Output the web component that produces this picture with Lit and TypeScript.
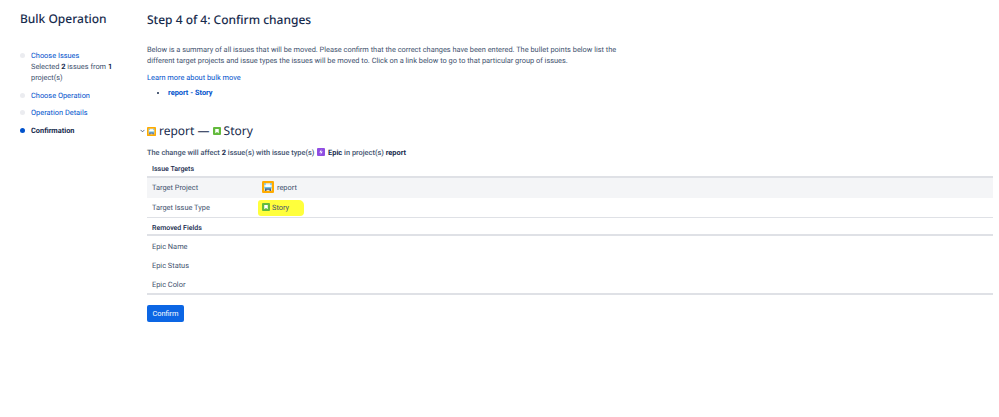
import { LitElement, html, css } from "lit";
import { customElement } from "lit/decorators.js";

const projectIcon = (size: number) => html`<svg class="ico" width=${size} height=${size} viewBox="0 0 16 16">
  <rect width="16" height="16" rx="1.5" fill="#ffab00"/>
  <rect x="3" y="3" width="10" height="10" fill="#dff3fb"/>
  <rect x="5" y="5" width="6" height="3" fill="#fff"/>
  <rect x="3" y="3" width="2" height="2" fill="#5fb7e5"/>
  <rect x="11" y="3" width="2" height="2" fill="#5fb7e5"/>
  <rect x="3" y="8" width="10" height="2" fill="#6cc4e8"/>
  <rect x="4" y="10" width="8" height="1.5" fill="#243c6b"/>
  <rect x="4" y="11.5" width="2" height="1.5" fill="#243c6b"/>
  <rect x="10" y="11.5" width="2" height="1.5" fill="#243c6b"/>
</svg>`;

const storyIcon = (size: number) => html`<svg class="ico" width=${size} height=${size} viewBox="0 0 16 16">
  <rect width="16" height="16" rx="2" fill="#63ba3c"/>
  <path d="M4.5 4h7v8.5L8 10.2l-3.5 2.3z" fill="#fff"/>
</svg>`;

const epicIcon = () => html`<svg class="ico inl" width="8" height="8" viewBox="0 0 16 16">
  <rect width="16" height="16" rx="2" fill="#904ee2"/>
  <path d="M9 2.5 4.5 9H8l-1 4.5L11.5 7H8z" fill="#fff"/>
</svg>`;

@customElement("app-root")
export class AppRoot extends LitElement {
  static styles = css`
    :host {
      display: flex;
      width: 999px;
      height: 417px;
      overflow: hidden;
      background: #fff;
      font-family: Roboto, "Noto Sans", sans-serif;
      font-size: 7.4px;
      line-height: 11px;
      color: #42526e;
      text-rendering: geometricPrecision;
    }
    .side { width: 147px; flex: none; padding: 11px 0 0 20px; box-sizing: border-box; }
    .side h1 { margin: 0 0 24px; font-family: "Noto Sans", sans-serif; font-size: 12px; line-height: 15px; font-weight: 500; color: #172b4d; }
    .steps { list-style: none; margin: 0; padding: 0; display: flex; flex-direction: column; gap: 6.5px; }
    .steps li { position: relative; padding-left: 11px; width: 95px; box-sizing: border-box; line-height: 11px; color: #42526e; }
    .steps li::before {
      content: ""; position: absolute; left: 0; top: 3px;
      width: 5px; height: 5px; border-radius: 50%; background: #ebecf0;
    }
    .steps li.on::before { background: #0052cc; }
    .steps li.on { font-weight: 700; color: #172b4d; }
    a { color: #0052cc; text-decoration: none; }
    b { color: #172b4d; font-weight: 700; }
    .main { width: 846px; flex: none; padding-top: 12px; box-sizing: border-box; }
    .main h2 { margin: 0 0 17px; font-family: "Noto Sans", sans-serif; font-size: 12px; line-height: 15px; font-weight: 500; color: #172b4d; }
    .intro { margin: 0 0 6px; width: 475px; line-height: 11px; }
    .learn { margin: 0 0 4px; }
    .list { margin: 0 0 25px; padding: 0 0 0 21px; color: #172b4d; }
    .list a { font-weight: 700; }
    .head { display: flex; align-items: center; gap: 3px; margin: 0 0 8px -7px; font-family: "Noto Sans", sans-serif; font-size: 12px; line-height: 16px; font-weight: 400; color: #172b4d; }
    .chev { width: 5px; flex: none; margin-right: -1px; }
    .ico { flex: none; display: block; }
    .ico.inl { display: inline-block; vertical-align: -1px; margin: 0 1px; }
    .sum { margin: 0 0 3px; font-weight: 500; color: #42526e; white-space: nowrap; }
    table { width: 846px; border-collapse: collapse; }
    th { text-align: left; vertical-align: bottom; padding: 0 5px 1px; height: 14px; font-weight: 500; font-size: 7px; color: #172b4d; border-bottom: 2px solid #dfe1e6; }
    tr.t2 th { height: 16px; padding-bottom: 0; }
    td { padding: 0 5px; color: #42526e; height: 19px; }
    td:first-child { width: 100px; }
    tr.f td { padding-top: 1px; height: 18px; }
    tr.f.end2 td { padding-top: 2px; height: 17px; border-bottom: 2px solid #dfe1e6; }
    tr.grey td { background: #f4f5f7; padding-bottom: 2px; height: 18px; }
    tr.end td { height: 19px; border-bottom: 1px solid #dfe1e6; }
    .cell { display: flex; align-items: center; gap: 3px; }
    .mark { background: #ffff3c; display: inline-flex; align-items: center; gap: 2px; padding: 2px 15px 3px 4px; margin-left: -4px; border-radius: 3px 5px 4px 3px; }
    button {
      margin-top: 10px; width: 37px; height: 17px; border: 0; border-radius: 2px; padding: 0;
      background: #0c66e4; color: #fff; font: inherit; display: block;
    }
  `;

  render() {
    return html`
      <aside class="side">
        <h1>Bulk Operation</h1>
        <ul class="steps">
          <li><a href="#">Choose Issues</a><br />Selected <b>2</b> issues from <b>1</b> project(s)</li>
          <li><a href="#">Choose Operation</a></li>
          <li><a href="#">Operation Details</a></li>
          <li class="on">Confirmation</li>
        </ul>
      </aside>
      <main class="main">
        <h2>Step 4 of 4: Confirm changes</h2>
        <p class="intro">Below is a summary of all issues that will be moved. Please confirm that the correct changes have been entered. The bullet points below list the different target projects and issue types the issues will be moved to. Click on a link below to go to that particular group of issues.</p>
        <p class="learn"><a href="#">Learn more about bulk move</a></p>
        <ul class="list"><li><a href="#">report - Story</a></li></ul>
        <div class="head">
          <svg class="chev" viewBox="0 0 6 4" height="4"><path d="M.7.7 3 3 5.3.7" fill="none" stroke="#42526e" stroke-width="1"/></svg>
          ${projectIcon(9)}<span>report —</span>${storyIcon(8)}<span>Story</span>
        </div>
        <div class="sum">The change will affect <b>2</b> issue(s) with issue type(s) ${epicIcon()} <b>Epic</b> in project(s) <b>report</b></div>
        <table>
          <tr><th colspan="2">Issue Targets</th></tr>
          <tr class="grey"><td>Target Project</td><td><div class="cell">${projectIcon(12)}report</div></td></tr>
          <tr class="end"><td>Target Issue Type</td><td><span class="mark">${storyIcon(8)}Story</span></td></tr>
          <tr class="t2"><th colspan="2">Removed Fields</th></tr>
          <tr class="f"><td>Epic Name</td><td></td></tr>
          <tr class="f"><td>Epic Status</td><td></td></tr>
          <tr class="f end2"><td>Epic Color</td><td></td></tr>
        </table>
        <button>Confirm</button>
      </main>
    `;
  }
}
